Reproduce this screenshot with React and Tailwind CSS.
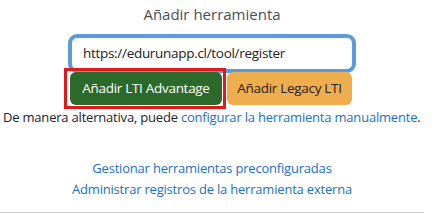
import React from 'react';

export default function App() {
    return (
        <div className="w-[441px] h-[222px] bg-white overflow-hidden" style={{ fontFamily: '"Open Sans", "Noto Sans", sans-serif' }}>
            <div className="w-[424px] px-[3px] flex flex-col items-center border-b border-[#d2d2d2] h-[213px]">
                <h3 className="shrink-0 mt-[3px] text-[15px] leading-[22px] text-[#4a4f55] font-normal">Añadir herramienta</h3>
                <div className="shrink-0 mt-[9px] w-[288px] h-[39px] rounded-[9px] border-[4px] border-[#5b9bd9] flex items-center pl-[11px]">
                    <span className="text-[13.5px] text-[#1d2125] tracking-[-0.3px]">https://edurunapp.cl/tool/register</span>
                </div>
                <div className="shrink-0 mt-[-5px] mr-[8px] w-[288px] flex items-start gap-[1px]">
                    {/* red highlight box around the selected button */}
                    <div className="w-[162px] h-[41px] border-[3px] border-[#e0191f] pl-[3px] pr-[1px] pt-[1px]">
                        <button className="w-[152px] h-[33px] rounded-[6px] bg-[#2c6a2c] text-white text-[13.5px] tracking-[-0.3px]">
                            Añadir LTI Advantage
                        </button>
                    </div>
                    <button className="mt-[4px] w-[125px] h-[33px] rounded-[6px] bg-[#f0ad4e] text-[#1d2125] text-[13.5px] tracking-[-0.3px]">
                        Añadir Legacy LTI
                    </button>
                </div>
                <p className="shrink-0 self-start mt-[-2px] text-[13px] leading-[20px] text-[#1d2125] tracking-[-0.2px] whitespace-nowrap">
                    De manera alternativa, puede <a className="text-[#1a6fc4]">configurar la herramienta manualmente</a>.
                </p>
                <div className="shrink-0 mt-[31px] flex flex-col items-center text-[13px] leading-[21px] text-[#1a6fc4] tracking-[-0.2px]">
                    <a>Gestionar herramientas preconfiguradas</a>
                    <a>Administrar registros de la herramienta externa</a>
                </div>
            </div>
        </div>
    );
}
